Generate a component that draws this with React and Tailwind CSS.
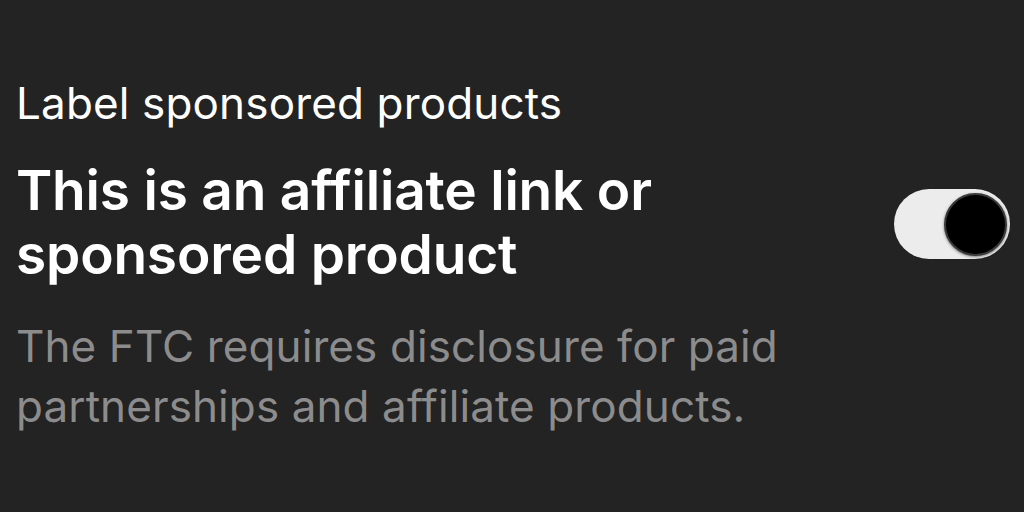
export default function App() {
  return (
    <div className="h-[512px] w-[1024px] overflow-hidden bg-[#232323] pl-4 pr-[14px] pt-[77px] font-['Inter','Noto_Sans',sans-serif]">
      <p className="text-[44px] leading-[52px] tracking-[0.15px] text-white">Label sponsored products</p>
      <div className="mt-[29px] flex items-center justify-between">
        <h2 className="text-[55px] font-semibold leading-[64px] tracking-[-0.2px] text-white">
          This is an affiliate link or
          <br />
          sponsored product
        </h2>
        <button
          type="button"
          aria-label="Toggle sponsored label"
          className="mt-[4px] flex h-[70px] w-[116px] items-center justify-end rounded-full bg-[#ececec] pr-[3px]"
        >
          <span className="h-[63px] w-[63px] rounded-full border-2 border-[#3a3a3a] bg-black shadow-[0_1px_3px_rgba(0,0,0,0.5)]" />
        </button>
      </div>
      <p className="mt-[30px] text-[44px] leading-[60px] tracking-[0.1px] text-[#8c8c8c]">
        The FTC requires disclosure for paid
        <br />
        partnerships and affiliate products.
      </p>
    </div>
  );
}
